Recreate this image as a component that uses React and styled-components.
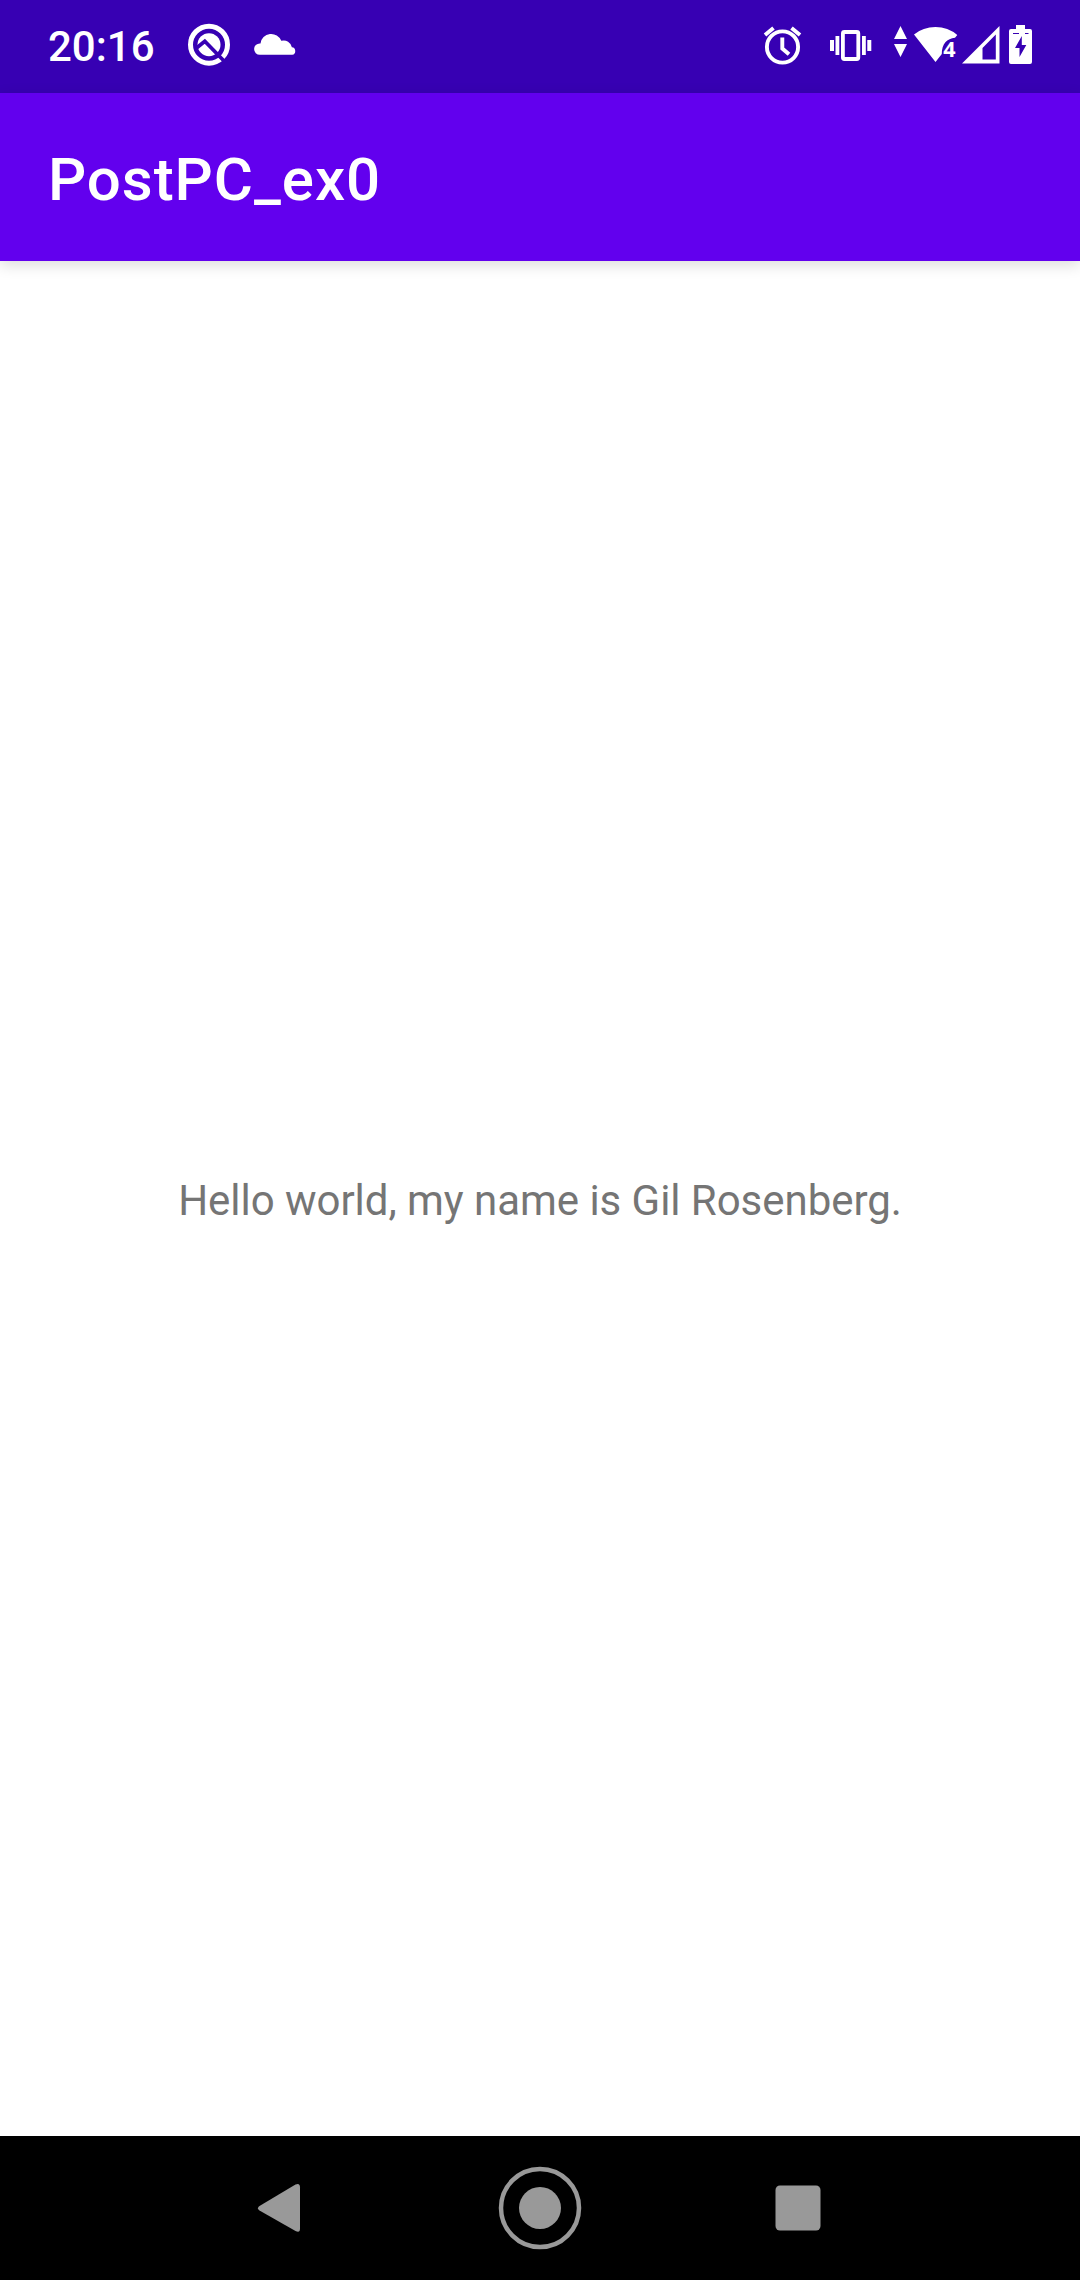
import React from 'react';
import styled, { createGlobalStyle } from 'styled-components';

const GlobalStyle = createGlobalStyle`
  * { box-sizing: border-box; }
  body { margin: 0; background: #fff; font-family: Roboto, "Noto Sans", sans-serif; }
`;

const Screen = styled.div`
  display: flex;
  flex-direction: column;
  width: 1080px;
  height: 2280px;
  background: #fff;
  overflow: hidden;
`;

const StatusBar = styled.header`
  display: flex;
  align-items: center;
  flex: none;
  height: 93px;
  padding-left: 48px;
  background: #3700b3;
  color: #fff;
`;

const Clock = styled.time`
  width: 139px;
  font-size: 42px;
  font-weight: 500;
  line-height: 49px;
  white-space: nowrap;
`;

const Glyph = styled.svg`
  display: block;
  flex: none;
  margin-left: ${(p) => p.$gap || 0}px;
  fill: currentColor;
`;

const StatusGroup = styled.div`
  display: flex;
  align-items: center;
  height: 93px;
  margin-left: auto;
  padding-right: 48px;
`;

const AppBar = styled.div`
  display: flex;
  align-items: center;
  flex: none;
  height: 168px;
  padding: 5px 0 0 48px;
  background: #6200ee;
  color: #fff;
  box-shadow: 0 4px 14px rgba(0, 0, 0, 0.14);
`;

const Title = styled.h1`
  margin: 0;
  font-size: 60px;
  font-weight: 500;
  line-height: 70px;
  letter-spacing: 0.95px;
`;

const Content = styled.main`
  display: flex;
  flex: 1;
  align-items: center;
  justify-content: center;
  padding-top: 4px;
`;

const Greeting = styled.p`
  margin: 0;
  color: #757575;
  font-size: 42px;
  line-height: 50px;
  letter-spacing: -0.04px;
  white-space: nowrap;
`;

const NavBar = styled.nav`
  display: flex;
  align-items: center;
  justify-content: center;
  flex: none;
  height: 144px;
  background: #000;
  color: #999;
`;

const NavButton = styled.button`
  display: flex;
  align-items: center;
  justify-content: center;
  width: 258px;
  height: 144px;
  padding: 0;
  border: 0;
  background: none;
  color: inherit;
`;

const BadgeText = styled.text`
  font-family: "Noto Sans", sans-serif;
  font-size: 21.5px;
  font-weight: 700;
`;

const AppIcon = () => (
  <Glyph width="44" height="93" viewBox="187 0 44 93">
    <circle cx="209" cy="44.7" r="18.5" fill="none" stroke="#fff" strokeWidth="5" />
    <circle cx="209" cy="44.7" r="11.5" />
    <path d="M196.500 48L204.800 41.200L225.500 62.500" fill="none" stroke="#3700b3" strokeWidth="3.700" />
  </Glyph>
);

const CloudIcon = () => (
  <Glyph $gap={22} width="44" height="93" viewBox="253 0 44 93">
    <path d="M259.800 54.800a5.700 5.700 0 0 1 0-11.400h0.700a10.800 10.800 0 0 1 20.800-2.600a8.300 8.300 0 0 1 10.600 6.500a3.800 3.800 0 0 1 0.300 7.500z" />
  </Glyph>
);

const AlarmIcon = () => (
  <Glyph width="40" height="93" viewBox="762 0 40 93">
    <g fill="none" stroke="#fff" strokeWidth="3.9">
      <circle cx="782.500" cy="47" r="15.600" />
      <path d="M782.300 37.500V48.500L789 54.300M765 35L773.500 28M800 35L791.500 28" />
    </g>
  </Glyph>
);

const VibrateIcon = () => (
  <Glyph $gap={26} width="44" height="93" viewBox="828 0 44 93">
    <path d="M830 40h4v11h-4zM835.500 36h3.800v19h-3.800zM862 36h3.800v19H862zM867.300 40h4v11h-4z" />
    <rect x="842.900" y="32" width="15.400" height="27" rx="1.500" fill="none" stroke="#fff" strokeWidth="3.800" />
  </Glyph>
);

const ActivityIcon = () => (
  <Glyph $gap={20} width="18" height="93" viewBox="892 0 18 93">
    <path d="M894 39L900.500 26L907 39zM894 44H907L900.500 57z" />
  </Glyph>
);

const WifiIcon = () => (
  <Glyph $gap={3} width="46" height="93" viewBox="913 0 46 93">
    <path d="M914 34.500Q923 27 935.500 27T957.300 35L955 37.800C947 38.500 941.800 44 941.800 54L935.500 62z" />
    <BadgeText x="943.200" y="56.500">4</BadgeText>
  </Glyph>
);

const SignalIcon = () => (
  <Glyph $gap={2} width="40" height="93" viewBox="961 0 40 93">
    <path fillRule="evenodd" d="M962 63.500L999.500 26V63.500zM982.500 59.500H995.800V34.500L982.500 48z" />
  </Glyph>
);

const BatteryIcon = () => (
  <Glyph $gap={7} width="24" height="93" viewBox="1008 0 24 93">
    <path d="M1016 25h9v4h5a2 2 0 0 1 2 2v31a2 2 0 0 1-2 2h-19a2 2 0 0 1-2-2v-31a2 2 0 0 1 2-2h5z" />
    <path d="M1013 33.500h6M1025 33.500h3.500" stroke="#3700b3" />
    <path fill="#3700b3" d="M1021.800 36v9h4.500l-6.800 12v-9h-4.500z" />
  </Glyph>
);

export default function App() {
  return (
    <>
      <GlobalStyle />
      <Screen>
        <StatusBar>
          <Clock>20:16</Clock>
          <AppIcon />
          <CloudIcon />
          <StatusGroup>
            <AlarmIcon />
            <VibrateIcon />
            <ActivityIcon />
            <WifiIcon />
            <SignalIcon />
            <BatteryIcon />
          </StatusGroup>
        </StatusBar>
        <AppBar>
          <Title>PostPC_ex0</Title>
        </AppBar>
        <Content>
          <Greeting>Hello world, my name is Gil Rosenberg.</Greeting>
        </Content>
        <NavBar>
          <NavButton aria-label="Back">
            <Glyph width="50" height="50" viewBox="257 2183 50 50">
              <path d="M259.500 2206L295.500 2184.500Q300 2182.500 300 2187.500V2228.500Q300 2233.500 295.500 2231L259.500 2210.500Q256.500 2208 259.500 2206z" />
            </Glyph>
          </NavButton>
          <NavButton aria-label="Home">
            <Glyph width="84" height="84" viewBox="0 0 84 84">
              <circle cx="42" cy="42" r="39" fill="none" stroke="currentColor" strokeWidth="4.500" />
              <circle cx="42" cy="42" r="21" />
            </Glyph>
          </NavButton>
          <NavButton aria-label="Recent apps">
            <Glyph width="46" height="46" viewBox="0 0 46 46">
              <rect x="0.500" y="0.500" width="45" height="45" rx="4.500" />
            </Glyph>
          </NavButton>
        </NavBar>
      </Screen>
    </>
  );
}
